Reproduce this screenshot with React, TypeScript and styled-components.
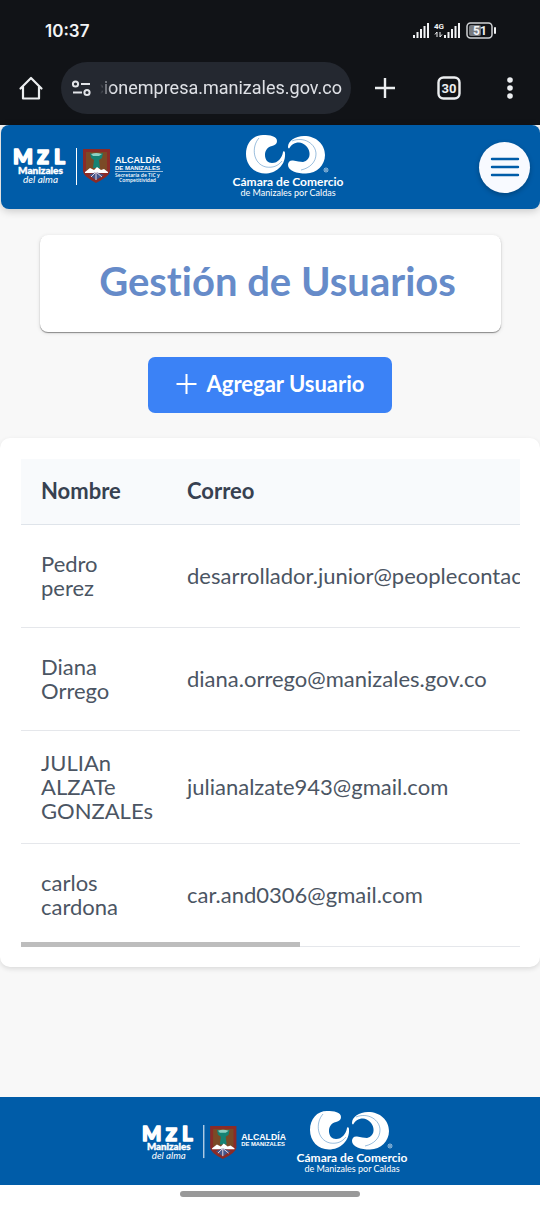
import React from "react";
import styled, { createGlobalStyle } from "styled-components";

const GlobalStyle = createGlobalStyle`
  *, *::before, *::after { box-sizing: border-box; }
  body {
    margin: 0;
    background: #f8f8f8;
    font-family: Lato, "Open Sans", sans-serif;
    font-variant-ligatures: none;
    -webkit-font-smoothing: antialiased;
  }
  button, input { font-family: inherit; }
`;

const Screen = styled.div`
  display: flex;
  flex-direction: column;
  min-height: 100vh;
`;

/* ---------- phone and browser chrome ---------- */

const Chrome = styled.div`
  background: #111317;
  color: #f2f3f5;
  height: 125px;
`;

const StatusBar = styled.div`
  display: flex;
  align-items: center;
  justify-content: space-between;
  height: 62px;
  padding: 0 43px 0 45px;
`;

const Clock = styled.time`
  font: 600 17px/24px Inter, sans-serif;
`;

const StatusIcons = styled.svg`
  display: block;
  width: 85px;
  height: 20px;
`;

const AddressRow = styled.div`
  display: flex;
  align-items: center;
  height: 52px;
  padding: 0 16px 0 17px;
`;

const AddressPill = styled.div`
  display: flex;
  flex: 1;
  align-items: center;
  min-width: 0;
  height: 52px;
  margin: 0 15px 0 16px;
  padding: 0 9px;
  border-radius: 26px;
  background: #242830;
`;

const AddressInput = styled.input`
  flex: 1;
  min-width: 0;
  height: 28px;
  padding: 0;
  border: 0;
  outline: 0;
  background: none;
  color: #dfe1e6;
  font: 400 18px/28px Roboto, sans-serif;
  text-align: right;
  mask-image: linear-gradient(to right, transparent 8px, #000 20px);
`;

const ChromeButton = styled.button<{ $space?: number }>`
  display: grid;
  place-items: center;
  width: 28px;
  height: 28px;
  margin-left: ${({ $space = 0 }) => $space}px;
  padding: 0;
  border: 0;
  background: none;
  color: inherit;
  flex: none;
`;

/* ---------- site header and footer ---------- */

const SiteHeader = styled.header`
  display: grid;
  grid-template-columns: 6fr auto 5fr;
  align-items: center;
  height: 84px;
  margin-left: 1px;
  padding: 0 10px;
  border-radius: 8px;
  background: #005ca8;
  box-shadow: 0 2px 8px rgba(0, 0, 0, 0.2);
`;

const MenuButton = styled.button`
  display: grid;
  place-items: center;
  justify-self: end;
  width: 51px;
  height: 51px;
  padding: 0;
  border: 0;
  border-radius: 50%;
  background: #f8faff;
  color: #005ca8;
  box-shadow: 0 2px 5px rgba(0, 0, 0, 0.25);
`;

const SiteFooter = styled.footer`
  display: flex;
  align-items: center;
  justify-content: center;
  gap: 6px;
  height: 88px;
  padding: 4px 0 0 9px;
  background: #005ca8;
`;

const LogoSvg = styled.svg`
  display: block;
  flex: none;
  overflow: visible;
`;

/* ---------- page ---------- */

const Main = styled.main`
  display: flex;
  flex: 1;
  flex-direction: column;
  align-items: center;
  gap: 25px;
  padding: 26px 0 128px;
`;

const TitleCard = styled.div`
  align-self: stretch;
  margin: 0 39px 0 40px;
  padding: 22px 0 27px 14px;
  border-radius: 8px;
  background: #fff;
  box-shadow: 0 1px 1px rgba(0, 0, 0, 0.4), 0 1px 4px rgba(0, 0, 0, 0.12);
`;

const Title = styled.h1`
  margin: 0;
  color: #668bc9;
  font-size: 40px;
  font-weight: 700;
  line-height: 48px;
  text-align: center;
`;

const AddButton = styled.button`
  display: flex;
  align-items: center;
  gap: 10px;
  height: 56px;
  padding: 0 28px 2px;
  border: 0;
  border-radius: 7px;
  background: #3b82f6;
  color: #fff;
  font-size: 22px;
  font-weight: 700;
  line-height: 24px;
`;

const TableCard = styled.section`
  align-self: stretch;
  padding: 21px 20px 20px 21px;
  border-radius: 10px;
  background: #fff;
  box-shadow: 0 2px 5px rgba(0, 0, 0, 0.12);
`;

const TableScroller = styled.div`
  position: relative;
  overflow: hidden;
`;

const UserTable = styled.table`
  width: 100%;
  border-spacing: 0;
  table-layout: fixed;
  color: #4b5563;
  font-size: 22px;
  line-height: 24px;
`;

const HeadCell = styled.th<{ $width?: string }>`
  width: ${({ $width = "auto" }) => $width};
  height: 66px;
  padding: 0 0 2px 20px;
  border-bottom: 1px solid #dfe4ea;
  background: #f8fafc;
  color: #374151;
  font-weight: 700;
  text-align: left;
`;

const Cell = styled.td`
  height: 103px;
  padding: 20px 0 20px 20px;
  border-bottom: 1px solid #e5e7eb;
  white-space: nowrap;
`;

const NameCell = styled(Cell)`
  padding-right: 13px;
  white-space: normal;
`;

const ScrollThumb = styled.div`
  position: absolute;
  bottom: 0;
  left: 0;
  width: 56%;
  height: 5px;
  background: #bdbdbd;
`;

const GestureBar = styled.div`
  display: flex;
  justify-content: center;
  height: 21px;
  padding-top: 6px;
  background: #fff;

  &::after {
    content: "";
    width: 180px;
    height: 6px;
    border-radius: 3px;
    background: #999;
  }
`;

/* ---------- logos ---------- */

const Shield = () => (
  <g>
    <path d="M72 1H99V23Q99 28 85 35Q72 28 72 23Z" fill="#8b2b27" />
    <path d="M75 4H96V22H75Z" fill="#7b4a26" />
    <path d="M79 5Q85 8 92 5L91 10L88 12L89 20H82L83 12L80 10Z" fill="#168273" />
    <path d="M80 6Q85 4 91 6L88 8H82Z" fill="#8dd1c3" />
    <path d="M74 24L79 20L83 22L86 19L90 22L93 21L97 24V25H74Z" fill="#fff" />
    <path d="M78 27L85 24L93 27L85 32Z" fill="#43558b" />
    <path d="M80 29L85 24L91 29M85 24V32" stroke="#e9d7dc" strokeWidth="1" fill="none" />
  </g>
);

const CityLogo = ({ department = false }: { department?: boolean }) => (
  <LogoSvg
    width={department ? 154 : 150}
    height={department ? 38 : 36}
    viewBox={department ? "0 0 154 38" : "0 0 154 37"}
    role="img"
    aria-label="Alcaldía de Manizales"
    fill="#fff"
    fontFamily="Lato, sans-serif"
  >
    <text y="16" fontSize="20" fontFamily="Lato, sans-serif" fontWeight="900" stroke="#fff" strokeWidth="1.6" strokeLinejoin="round">
      <tspan x="2" fontSize="21">M</tspan>
      <tspan x="26" fontSize="26">z</tspan>
      <tspan x="43" fontSize="21">L</tspan>
    </text>
    <text x="7" y="26" fontSize="10" fontWeight="900" stroke="#fff" strokeWidth="0.4">Manizales</text>
    <text x="12" y="35" fontSize="10" fontStyle="italic">del alma</text>
    <rect x="65" y="0" width="1" height={department ? 37 : 34} />
    <Shield />
    <g fontFamily="'Liberation Sans', sans-serif" fontWeight="700">
      <text x="104" y="15" fontSize="9">ALCALDÍA</text>
      <text x="104" y="22" fontSize="6">DE MANIZALES</text>
    </g>
    {department && (
      <g>
        <rect x="104" y="23.4" width="48" height="0.6" />
        <g fontSize="5" fontFamily="'Open Sans', sans-serif" fontWeight="600">
          <text x="104" y="29">Secretaría de TIC y</text>
          <text x="108" y="34">Competitividad</text>
        </g>
      </g>
    )}
  </LogoSvg>
);

const ChamberLogo = () => (
  <LogoSvg width="114" height="64" viewBox="-2 0 114 64" role="img" aria-label="Cámara de Comercio" fill="#fff">
    <path d="M29 0C36 0 43 1 43 6C43 9 41 10 38 11C33 12 31 16 31 20C31 25 34 28 38 28C44 28 48 23 49 17C49 16 51 16 51 18C52 30 42 38.500 31 38.500C20 38.500 12 30 12 19C12 8 19 0 29 0Z" />
    <path d="M54 12C54 6 61 1 70 1C82 1 91 9 91 20C91 30 83 38.500 72 38.500C63 38.500 54 36 54 30C54 27 56 25 59 25.500C63 26 66 27 69 27C73 26 76 23 75.500 18C75 12 70 8 65 7.500C60 7.500 57 10 55.500 13C55 14 54 13 54 12Z" />
    <g fill="none" stroke="#005ca8" strokeWidth="0.4">
      <path d="M25 3C17 12 19 29 32 32C39 33 44 31 48 26" />
      <path d="M58 6C70 1 82 9 82 19C82 27 76 33 67 35" />
    </g>
    <circle cx="92" cy="35" r="2" fill="none" stroke="#fff" strokeWidth="0.6" />
    <circle cx="92" cy="35" r="0.8" />
    <g fontFamily="Lato, sans-serif" textAnchor="middle">
      <text x="54" y="51" fontSize="12" fontWeight="700">Cámara de Comercio</text>
      <text x="54" y="61" fontSize="9">de Manizales por Caldas</text>
    </g>
  </LogoSvg>
);

const bars = [3, 6, 9, 12, 15];

const users = [
  { name: "Pedro perez", email: "desarrollador.junior@peoplecontac" },
  { name: "Diana Orrego", email: "diana.orrego@manizales.gov.co" },
  { name: "JULIAn ALZATe GONZALEs", email: "julianalzate943@gmail.com" },
  { name: "carlos cardona", email: "car.and0306@gmail.com" },
];

export default function App() {
  return (
    <Screen>
      <GlobalStyle />
      <Chrome>
        <StatusBar>
          <Clock>10:37</Clock>
          <StatusIcons viewBox="0 0 85 20" fill="#f2f3f5" fontWeight="700">
            {bars.map((h, i) => (
              <rect key={i} x={1 + i * 3.5} y={17 - h} width="2" height={h} />
            ))}
            <text x="22" y="8" fontSize="8" fontFamily="Roboto, sans-serif">4G</text>
            <path d="M25 11V16M23 13.500L25 11M28 11V16L30 13.500" stroke="#f2f3f5" fill="none" />
            {bars.map((h, i) => (
              <rect key={i} x={32 + i * 3.5} y={17 - h} width="2" height={h} />
            ))}
            <rect x="55" y="2" width="25" height="15" rx="3.5" fill="none" stroke="#d0d2d5" strokeWidth="1.5" />
            <rect x="57" y="4" width="12" height="11" rx="2" fill="#777a7f" />
            <rect x="82" y="6" width="2" height="7" rx="1" />
            <text x="61" y="14" fontSize="12" fontFamily="Roboto, sans-serif">51</text>
          </StatusIcons>
        </StatusBar>
        <AddressRow>
          <ChromeButton aria-label="Inicio">
            <svg width="26" height="26" viewBox="0 0 26 26" fill="none" stroke="#eceef0" strokeWidth="2.2" strokeLinejoin="round" strokeLinecap="round">
              <path d="M2.500 13.500L13 3L23.500 13.500M5 12V23.500H21V12" />
            </svg>
          </ChromeButton>
          <AddressPill>
            <svg width="22" height="20" viewBox="0 0 22 20" fill="none" stroke="#e2e4e8" strokeWidth="2">
              <circle cx="5.5" cy="6" r="2.600" />
              <circle cx="17" cy="14.500" r="2.600" />
              <path d="M11 6H20M3 14.500H12" />
            </svg>
            <AddressInput aria-label="Dirección web" readOnly value="cionempresa.manizales.gov.co" />
          </AddressPill>
          <ChromeButton aria-label="Nueva pestaña" $space={5}>
            <svg width="22" height="22" viewBox="0 0 22 22" stroke="#eceef0" strokeWidth="2.4">
              <path d="M11 1V21M1 11H21" />
            </svg>
          </ChromeButton>
          <ChromeButton aria-label="Pestañas" $space={36}>
            <svg width="26" height="26" viewBox="0 0 26 26">
              <rect x="2.5" y="2.5" width="21" height="21" rx="5" fill="none" stroke="#eceef0" strokeWidth="2.4" />
              <text x="13" y="17.5" fontSize="13" fontWeight="700" fontFamily="Roboto, sans-serif" textAnchor="middle" fill="#eceef0">30</text>
            </svg>
          </ChromeButton>
          <ChromeButton aria-label="Más opciones" $space={33}>
            <svg width="6" height="22" viewBox="0 0 6 22" fill="#eceef0">
              <circle cx="3" cy="3" r="2.8" />
              <circle cx="3" cy="11" r="2.8" />
              <circle cx="3" cy="19" r="2.8" />
            </svg>
          </ChromeButton>
        </AddressRow>
      </Chrome>

      <SiteHeader>
        <CityLogo department />
        <ChamberLogo />
        <MenuButton aria-label="Menú">
          <svg width="30" height="22" viewBox="0 0 30 22" stroke="currentColor" strokeWidth="2.4" strokeLinecap="round">
            <path d="M2 3H28M2 11H28M2 19H28" />
          </svg>
        </MenuButton>
      </SiteHeader>

      <Main>
        <TitleCard>
          <Title>Gestión de Usuarios</Title>
        </TitleCard>
        <AddButton>
          <svg width="21" height="20" viewBox="0 0 21 20" stroke="#fff" strokeWidth="2">
            <path d="M10.500 0V20M0.500 10H20.500" />
          </svg>
          Agregar Usuario
        </AddButton>
        <TableCard>
          <TableScroller>
            <UserTable>
              <thead>
                <tr>
                  <HeadCell $width="146px">Nombre</HeadCell>
                  <HeadCell>Correo</HeadCell>
                </tr>
              </thead>
              <tbody>
                {users.map((user) => (
                  <tr key={user.email}>
                    <NameCell>{user.name}</NameCell>
                    <Cell>{user.email}</Cell>
                  </tr>
                ))}
              </tbody>
            </UserTable>
            <ScrollThumb />
          </TableScroller>
        </TableCard>
      </Main>

      <SiteFooter>
        <CityLogo />
        <ChamberLogo />
      </SiteFooter>
      <GestureBar />
    </Screen>
  );
}
